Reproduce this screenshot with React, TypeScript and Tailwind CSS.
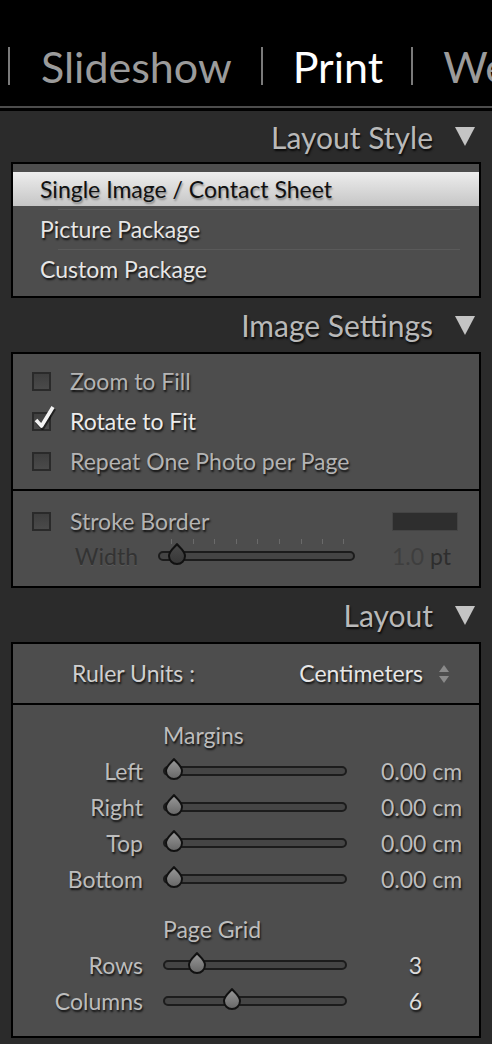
import React from "react";

const shadow = "[text-shadow:1px_2px_2px_rgba(0,0,0,0.8)]";

const Triangle = () => (
  <svg width="20" height="19" viewBox="0 0 20 19">
    <polygon points="0,0 20,0 10,19" fill="#c4c4c4" />
  </svg>
);

const Header = ({ title, className }: { title: string; className: string }) => (
  <div className={`flex items-center justify-end gap-[22px] pr-[17px] text-[30px] text-[#b9b9b9] ${className}`}>
    <span className={shadow}>{title}</span>
    <Triangle />
  </div>
);

const Thumb = ({ dark }: { dark?: boolean }) => (
  <svg width="24" height="24" viewBox="0 0 24 24" className="absolute top-1/2 -translate-x-1/2 -translate-y-[58%]">
    <defs>
      <linearGradient id={dark ? "tg-dark" : "tg"} x1="0" y1="0" x2="0" y2="1">
        <stop offset="0" stopColor={dark ? "#4a4a4a" : "#9a9a9a"} />
        <stop offset="1" stopColor={dark ? "#363636" : "#666666"} />
      </linearGradient>
    </defs>
    <path
      d="M12 2 C14 5 20 8.5 20 14 A8 8 0 0 1 4 14 C4 8.5 10 5 12 2 Z"
      fill={`url(#${dark ? "tg-dark" : "tg"})`}
      stroke="#111"
      strokeWidth="2"
      strokeLinejoin="round"
    />
  </svg>
);

const Slider = ({ pos, width, dark }: { pos: number; width: number; dark?: boolean }) => (
  <div className="relative h-[10px]" style={{ width }}>
    <div className="absolute inset-0 rounded-full border-2 border-[#1c1c1c] bg-[#454545]" />
    <div className="absolute top-1/2" style={{ left: pos }}>
      <Thumb dark={dark} />
    </div>
  </div>
);

const Check = ({ checked }: { checked?: boolean }) => (
  <div className="relative w-[19px] h-[19px] shrink-0 border-2 border-[#2a2a2a] bg-gradient-to-b from-[#3f3f3f] to-[#4a4a4a]">
    {checked && (
      <svg width="24" height="26" viewBox="0 0 24 26" className="absolute left-[-1px] top-[-10px]">
        <path d="M3 16 L8.5 22 L20 3" fill="none" stroke="#000" strokeOpacity="0.55" strokeWidth="4.5" strokeLinejoin="round" transform="translate(1 1.5)" />
        <path d="M3 16 L8.5 22 L20 3" fill="none" stroke="#f2f2f2" strokeWidth="3.6" strokeLinejoin="round" />
      </svg>
    )}
  </div>
);

const CheckRow = ({ label, checked, bright }: { label: string; checked?: boolean; bright?: boolean }) => (
  <div className="flex items-center h-[40px] pl-[19px] gap-[19px]">
    <Check checked={checked} />
    <span className={`text-[23px] ${bright ? "text-[#ececec]" : "text-[#b4b4b4]"} ${shadow}`}>{label}</span>
  </div>
);

const MarginRow = ({ label, pos, value, grid }: { label: string; pos: number; value: string; grid?: boolean }) => (
  <div className="flex items-center h-[36px]">
    <span className={`w-[130px] text-right text-[23px] text-[#bdbdbd] ${shadow}`}>{label}</span>
    <div className="ml-[20px]">
      <Slider pos={pos} width={184} />
    </div>
    <span
      className={`ml-[34px] text-[23px] ${grid ? "w-[41px] text-right text-[#dcdcdc]" : "text-[#bdbdbd]"} ${shadow}`}
    >
      {value}
    </span>
  </div>
);

export default function App() {
  return (
    <div className="w-[492px] h-[1044px] overflow-hidden bg-[#2b2b2b] font-['Lato',sans-serif] leading-none">
      {/* module picker */}
      <div className="h-[106px] bg-black flex items-center pt-[26px] whitespace-nowrap text-[43px] overflow-hidden">
        <div className="shrink-0 ml-[8px] w-[2px] h-[38px] bg-[#7a7a7a]" />
        <span className="shrink-0 ml-[31px] text-[#9b9b9b]">Slideshow</span>
        <div className="shrink-0 ml-[29px] w-[2px] h-[38px] bg-[#7a7a7a]" />
        <span className="shrink-0 ml-[30px] text-white">Print</span>
        <div className="shrink-0 ml-[28px] w-[2px] h-[38px] bg-[#7a7a7a]" />
        <span className="shrink-0 ml-[30px] text-[#9b9b9b]">Web</span>
      </div>
      <div className="h-[2px] bg-[#4c4c4c]" />
      <div className="h-[3px] bg-black" />

      <Header title="Layout Style" className="h-[51px]" />
      <div className="mx-[11px] border-2 border-black bg-[#4d4d4d] pt-[8px] pb-[7px]">
        <div className="h-[34px] flex items-center pl-[27px] bg-gradient-to-b from-[#ededed] to-[#c6c6c6]">
          <span className="text-[23px] text-[#111] [text-shadow:1px_2px_2px_rgba(0,0,0,0.35)]">
            Single Image / Contact Sheet
          </span>
        </div>
        <div className="h-[3px]" />
        <div className="ml-[45px] mr-[19px] h-px bg-[#5a5a5a]" />
        <div className="h-[39px] flex items-center pl-[27px]">
          <span className={`text-[23px] text-[#e6e6e6] ${shadow}`}>Picture Package</span>
        </div>
        <div className="ml-[45px] mr-[19px] h-px bg-[#5a5a5a]" />
        <div className="h-[39px] flex items-center pl-[27px]">
          <span className={`text-[23px] text-[#e6e6e6] ${shadow}`}>Custom Package</span>
        </div>
      </div>

      <Header title="Image Settings" className="h-[54px]" />
      <div className="mx-[11px] border-2 border-black bg-[#4d4d4d]">
        <div className="pt-[7px] pb-[8px]">
          <CheckRow label="Zoom to Fill" />
          <CheckRow label="Rotate to Fit" checked bright />
          <CheckRow label="Repeat One Photo per Page" />
        </div>
        <div className="h-[2px] bg-black" />
        <div className="pt-[14px] pb-[11px]">
          <div className="flex items-center h-[32px] pl-[19px] gap-[19px]">
            <Check />
            <span className={`text-[23px] text-[#b4b4b4] ${shadow}`}>Stroke Border</span>
            <div className="ml-auto mr-[21px] w-[66px] h-[19px] bg-[#2e2e2e] border border-[#444]" />
          </div>
          <div className="flex items-center h-[38px]">
            <span className="w-[125px] text-right text-[23px] text-[#333] [text-shadow:0_1px_0_rgba(255,255,255,0.08)]">
              Width
            </span>
            <div className="ml-[20px] relative">
              <div className="absolute left-0 -top-[12px] w-[197px] flex">
                {[13, 35, 56, 78, 99, 121, 143, 164, 185].map((x) => (
                  <div key={x} className="absolute w-px h-[5px] bg-[#6a6a6a]" style={{ left: x }} />
                ))}
              </div>
              <Slider pos={19} width={197} dark />
            </div>
            <span className="ml-[37px] text-[23px] text-[#3e3e3e]">
              1.0 <span className="text-[#2e2e2e]">pt</span>
            </span>
          </div>
        </div>
      </div>

      <Header title="Layout" className="h-[54px]" />
      <div className="mx-[11px] border-2 border-black bg-[#4d4d4d]">
        <div className="h-[59px] flex items-center pl-[59px] pr-[29px]">
          <span className={`text-[23px] text-[#cfcfcf] ${shadow}`}>Ruler Units :</span>
          <span className={`ml-auto text-[23px] text-[#e6e6e6] ${shadow}`}>Centimeters</span>
          <svg width="12" height="20" viewBox="0 0 12 20" className="ml-[15px]">
            <polygon points="6,1 11,8 1,8" fill="#8a8a8a" />
            <polygon points="1,12 11,12 6,19" fill="#8a8a8a" />
          </svg>
        </div>
        <div className="h-[2px] bg-black" />
        <div className="pt-[12px] pb-[17px]">
          <div className={`pl-[150px] h-[36px] flex items-center text-[23px] text-[#bdbdbd] ${shadow}`}>Margins</div>
          <MarginRow label="Left" pos={11} value="0.00 cm" />
          <MarginRow label="Right" pos={11} value="0.00 cm" />
          <MarginRow label="Top" pos={11} value="0.00 cm" />
          <MarginRow label="Bottom" pos={11} value="0.00 cm" />
          <div className="h-[14px]" />
          <div className={`pl-[150px] h-[36px] flex items-center text-[23px] text-[#bdbdbd] ${shadow}`}>
            Page Grid
          </div>
          <MarginRow label="Rows" pos={34} value="3" grid />
          <MarginRow label="Columns" pos={69} value="6" grid />
        </div>
      </div>
    </div>
  );
}
